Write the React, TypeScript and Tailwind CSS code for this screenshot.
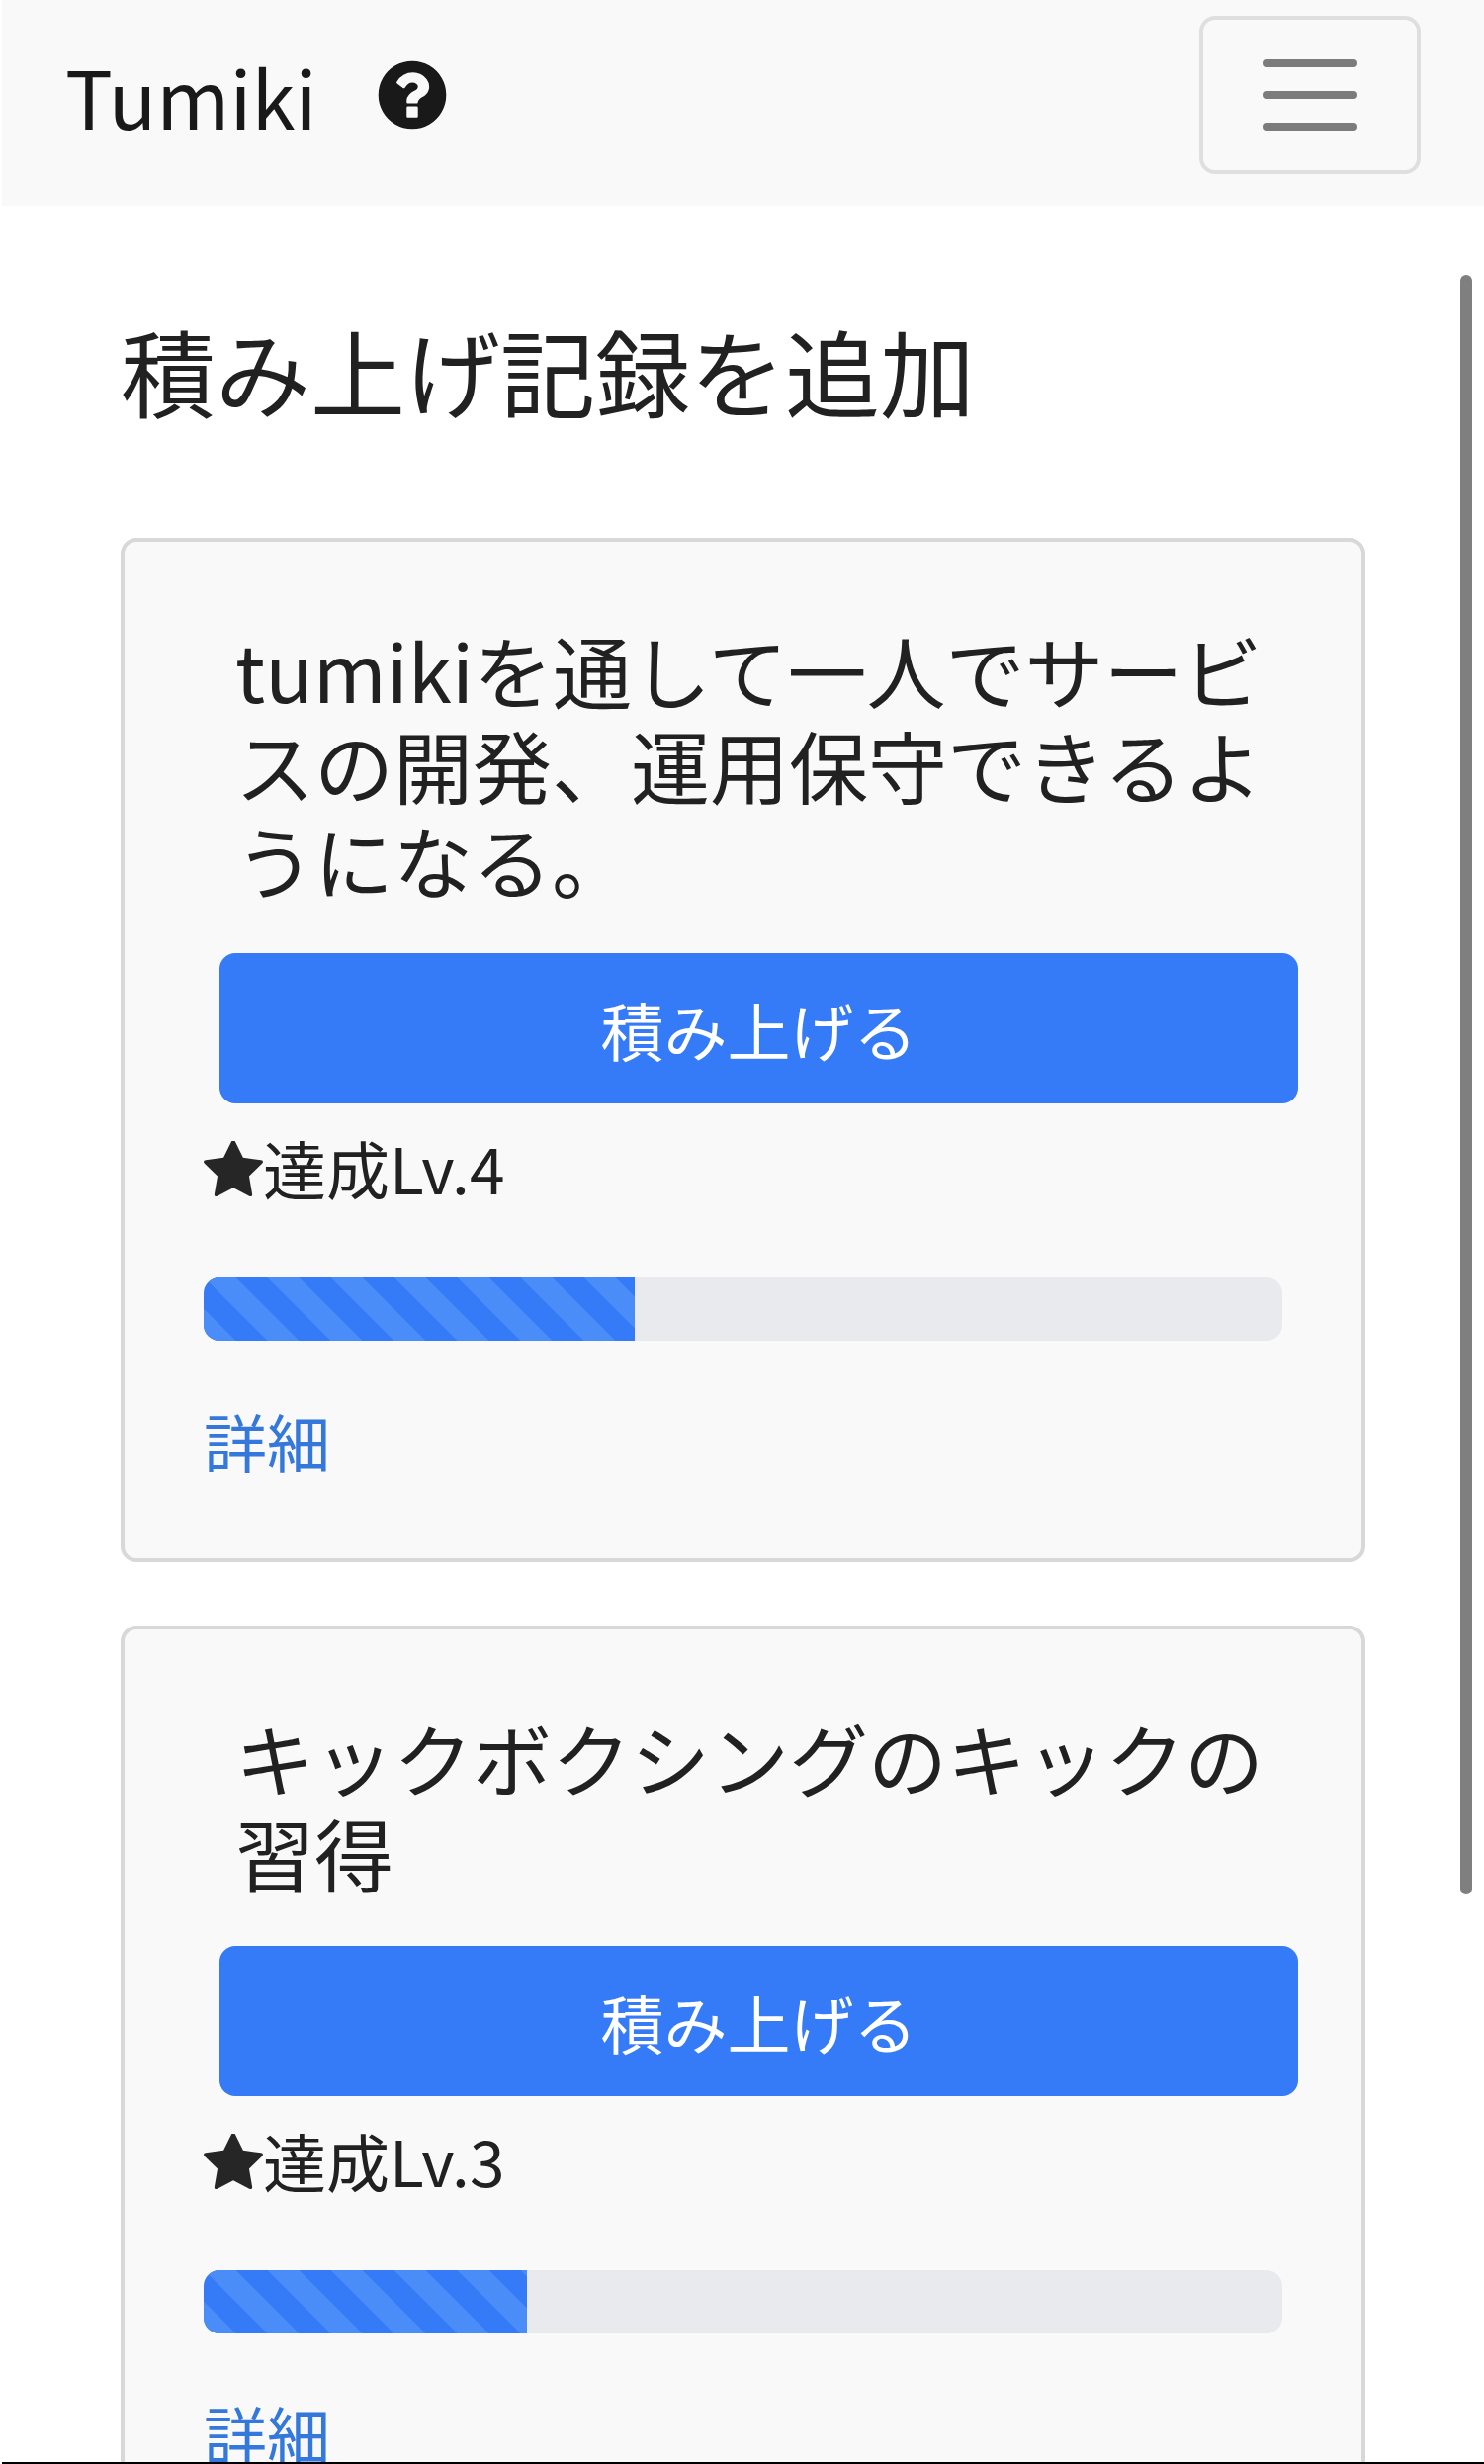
const goals = [
  {
    title: 'tumikiを通して一人でサービスの開発、運用保守できるようになる。',
    level: 4,
    progress: 40,
  },
  { title: 'キックボクシングのキックの習得', level: 3, progress: 30 },
];

function QuestionIcon() {
  return (
    <svg viewBox="0 0 1792 1792" className="size-20 fill-[#191919]" aria-hidden="true">
      <path d="M1024 1376v-192q0-14-9-23t-23-9h-192q-14 0-23 9t-9 23v192q0 14 9 23t23 9h192q14 0 23-9t9-23zm256-672q0-88-55.5-163t-138.5-116-170-41q-243 0-371 213-15 24 8 42l132 100q7 6 19 6 16 0 25-12 53-68 86-92 34-24 86-24 48 0 85.5 26t37.5 59q0 38-20 61t-68 45q-63 28-115.5 86.5t-52.5 125.5v36q0 14 9 23t23 9h192q14 0 23-9t9-23q0-19 21.5-49.5t54.5-49.5q32-18 49-28.5t46-35 44.5-48 28-60.5 12.5-81zm384 192q0 209-103 385.5t-279.5 279.5-385.5 103-385.5-103-279.5-279.5-103-385.5 103-385.5 279.5-279.5 385.5-103 385.5 103 279.5 279.5 103 385.5z" />
    </svg>
  );
}

function StarIcon() {
  return (
    <svg viewBox="64 64 1664 1664" className="mt-2 size-[60px] shrink-0 fill-[#262626]" aria-hidden="true">
      <path d="M1728 647q0 22-26 48l-363 354 86 500q1 7 1 20 0 21-10.5 35.5t-30.5 14.5q-19 0-40-12l-449-236-449 236q-22 12-40 12-21 0-31.5-14.5t-10.5-35.5q0-6 2-20l86-500-364-354q-25-27-25-48 0-37 56-46l502-73 225-455q19-41 49-41t49 41l225 455 502 73q56 9 56 46z" />
    </svg>
  );
}

function Navbar() {
  return (
    <header className="flex h-52 items-center bg-[#f9f9f9] px-16 pb-4">
      <a href="#" className="text-[80px] leading-[120px] text-[#191919]">
        Tumiki
      </a>
      <a href="#" aria-label="ヘルプ" className="ml-14">
        <QuestionIcon />
      </a>
      <button
        type="button"
        aria-label="メニュー"
        className="ml-auto rounded-2xl border-4 border-[#dfdfdf] px-12 py-4"
      >
        <svg viewBox="0 0 30 30" className="size-[120px]" aria-hidden="true">
          <path
            d="M4 7h22M4 15h22M4 23h22"
            stroke="#7c7c7c"
            strokeWidth="2"
            strokeLinecap="round"
          />
        </svg>
      </button>
    </header>
  );
}

function GoalCard({ title, level, progress }: { title: string; level: number; progress: number }) {
  return (
    <article className="rounded-2xl border-4 border-[#d8d8d8] bg-[#f9f9f9] px-20 pt-20 pb-18">
      <h2 className="pl-8 text-[80px] leading-24">{title}</h2>
      <button
        type="button"
        className="mt-12 -mr-4 ml-4 block h-38 w-full rounded-2xl bg-[#357af6] text-[64px] leading-24 text-white"
      >
        積み上げる
      </button>
      <p className="mt-4 flex items-center text-[64px] leading-24">
        <StarIcon />
        達成Lv.{level}
      </p>
      <div
        role="progressbar"
        aria-valuenow={progress}
        aria-label={title}
        className="mt-16 h-16 overflow-hidden rounded-2xl bg-[#e9eaed]"
      >
        <div
          className="h-full bg-[#357af6] bg-[linear-gradient(45deg,#4a8df8_25%,transparent_25%,transparent_50%,#4a8df8_50%,#4a8df8_75%,transparent_75%)] bg-[length:64px_64px]"
          style={{ width: `${progress}%` }}
        />
      </div>
      <a href="#" className="mt-13 block w-fit text-[64px] leading-24 text-[#3478dc]">
        詳細
      </a>
    </article>
  );
}

export default function App() {
  return (
    <div className="relative ml-0.5 h-screen overflow-hidden border-b-2 border-black bg-white font-['Noto_Sans_CJK_JP',sans-serif] text-[#212121]">
      <Navbar />
      <main className="px-30 pt-27">
        <h1 className="text-[96px] leading-29">積み上げ記録を追加</h1>
        <div className="mt-28 flex flex-col gap-16">
          {goals.map((goal) => (
            <GoalCard key={goal.title} {...goal} />
          ))}
        </div>
      </main>
      <div className="absolute top-[278px] right-3 h-[1638px] w-3 rounded-full bg-[#7f7f7f]" />
    </div>
  );
}
